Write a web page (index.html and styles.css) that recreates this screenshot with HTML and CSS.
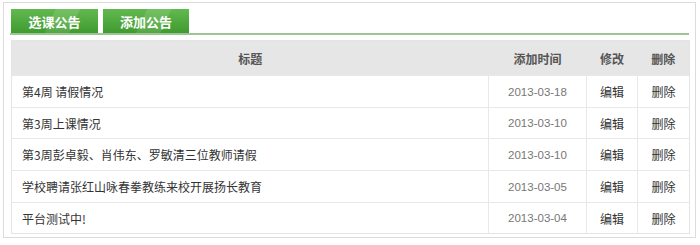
FILE: index.html
```html
<!DOCTYPE html>
<html lang="zh-CN">
<head>
<meta charset="utf-8">
<title>公告</title>
<link rel="stylesheet" href="styles.css">
</head>
<body>
<div class="panel">
  <div class="tabs">
    <a class="tab">选课公告</a>
    <a class="tab">添加公告</a>
  </div>
  <table class="list">
    <colgroup>
      <col class="c-title"><col class="c-date"><col class="c-edit"><col class="c-del">
    </colgroup>
    <thead>
      <tr><th>标题</th><th>添加时间</th><th>修改</th><th>删除</th></tr>
    </thead>
    <tbody>
      <tr class="r32"><td class="title">第4周 请假情况</td><td class="date">2013-03-18</td><td>编辑</td><td>删除</td></tr>
      <tr class="r31"><td class="title">第3周上课情况</td><td class="date">2013-03-10</td><td>编辑</td><td>删除</td></tr>
      <tr class="r32"><td class="title">第3周彭卓毅、肖伟东、罗敏清三位教师请假</td><td class="date">2013-03-10</td><td>编辑</td><td>删除</td></tr>
      <tr class="r32"><td class="title">学校聘请张红山咏春拳教练来校开展扬长教育</td><td class="date">2013-03-05</td><td>编辑</td><td>删除</td></tr>
      <tr class="r31"><td class="title">平台测试中!</td><td class="date">2013-03-04</td><td>编辑</td><td>删除</td></tr>
    </tbody>
  </table>
</div>
</body>
</html>
```
FILE: styles.css
```css
html, body {
  margin: 0;
  padding: 0;
  background: #ffffff;
}
body {
  font-family: "Noto Sans CJK SC", "Liberation Sans", sans-serif;
  font-size: 12px;
  color: #333;
}
.panel {
  margin: 2px 0 0 3px;
  width: 679px;
  height: 228px;
  border: 1px solid #dcdcdc;
  padding: 6px 6px 0 6px;
}
.tabs {
  display: flex;
  gap: 5px;
  height: 24px;
  border-bottom: 2px solid #9cc494;
  padding-left: 1px;
}
.tab {
  display: flex;
  align-items: center;
  justify-content: center;
  width: 87px;
  height: 24px;
  color: #fff;
  font-weight: bold;
  font-size: 13px;
  background:
    linear-gradient(115deg, rgba(255,255,255,0) 45%, rgba(255,255,255,0.12) 46%, rgba(255,255,255,0.12) 70%, rgba(255,255,255,0) 71%),
    linear-gradient(#62b94f, #3f9a2f);
}
.tab + .tab { width: 86px; }
.list {
  margin-top: 5px;
  margin-left: 1px;
  width: 678px;
  border-collapse: collapse;
  table-layout: fixed;
  border: 1px solid #e4e4e4;
}
.c-title { width: 477px; }
.c-date { width: 98px; }
.c-edit { width: 51px; }
.c-del { width: 52px; }
thead th {
  height: 34px;
  padding: 0;
  background: #e6e6e6;
  color: #555;
  font-weight: bold;
  font-size: 12px;
  text-align: center;
}
tbody td {
  padding: 0;
  border-top: 1px solid #e8e8e8;
  border-left: 1px solid #e8e8e8;
  text-align: center;
  color: #333;
}
tbody td:first-child { border-left: none; }
.r32 td { height: 31px; }
.r31 td { height: 30px; }
td.title {
  text-align: left;
  padding-left: 10px;
}
td.date {
  color: #777;
  font-family: "Liberation Sans", sans-serif;
  font-size: 11.5px;
}
```
